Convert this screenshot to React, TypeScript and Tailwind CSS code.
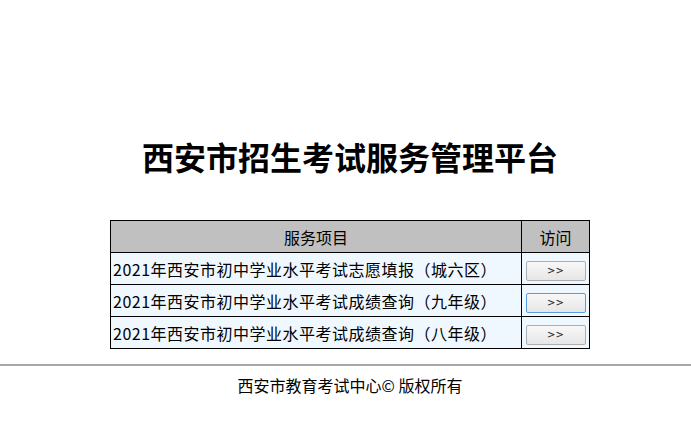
export default function App() {
  const rows = [
    '2021年西安市初中学业水平考试志愿填报（城六区）',
    '2021年西安市初中学业水平考试成绩查询（九年级）',
    '2021年西安市初中学业水平考试成绩查询（八年级）',
  ]

  return (
    <div className="w-full h-[440px] overflow-hidden bg-white text-black font-['Noto_Sans_CJK_SC','Noto_Sans',sans-serif]">
      <div className="w-[700px] flex flex-col items-center pt-[139px]">
        {/* Title */}
        <h1 className="text-[32px] font-bold leading-[34px]">西安市招生考试服务管理平台</h1>

        {/* Service table */}
        <table className="mt-[47px] w-[480px] border-collapse border border-black text-[16px]">
          <thead>
            <tr className="bg-[#c0c0c0] h-[32px]">
              <th className="border border-black font-normal w-[411px]">服务项目</th>
              <th className="border border-black font-normal">访问</th>
            </tr>
          </thead>
          <tbody>
            {rows.map((text, i) => (
              <tr key={text} className="bg-[#f0f8ff] h-[32px]">
                <td className="border border-black pl-[2px] whitespace-nowrap leading-none tracking-[0.5px]">{text}</td>
                <td className="border border-black text-center">
                  <button
                    className={`w-[60px] h-[20px] rounded-[2px] border bg-gradient-to-b from-[#f8f8f8] to-[#e6e6e6] text-[10px] leading-none text-[#222] font-['DejaVu_Sans',sans-serif] align-middle ${
                      i === 1 ? 'border-[#569de5]' : 'border-[#adadad]'
                    }`}
                  >
                    &gt;&gt;
                  </button>
                </td>
              </tr>
            ))}
          </tbody>
        </table>
      </div>

      {/* Footer */}
      <div className="mt-[15px] border-t-2 border-[#a8a8a8]">
        <div className="w-[700px] text-center text-[16px] leading-[24px] pt-[7px]">西安市教育考试中心© 版权所有</div>
      </div>
    </div>
  )
}
